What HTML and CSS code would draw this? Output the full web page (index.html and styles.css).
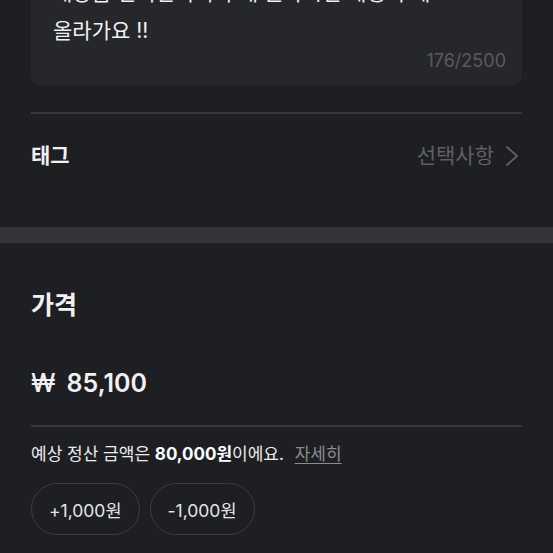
FILE: index.html
```html
<!DOCTYPE html>
<html lang="ko">
<head>
<meta charset="utf-8">
<link rel="stylesheet" href="styles.css">
</head>
<body>
<div class="section top">
  <div class="desc">
    <p class="desc-text">새상품 컨디션이며 구매 원하시면 채팅 주세요<br>올라가요 !!</p>
    <div class="counter">176/2500</div>
  </div>
  <div class="divider"></div>
  <div class="tag-row">
    <span class="tag-label">태그</span>
    <span class="tag-value">선택사항
      <svg class="chev" width="14" height="22" viewBox="0 0 14 22"><polyline points="2,2 12,11 2,20" fill="none" stroke="#626366" stroke-width="1.8" stroke-linecap="round" stroke-linejoin="round"/></svg>
    </span>
  </div>
</div>
<div class="band"></div>
<div class="section price">
  <h2 class="price-title">가격</h2>
  <div class="price-value"><span class="won">₩</span><span>85,100</span></div>
  <div class="divider"></div>
  <p class="settle">예상 정산 금액은 <b>80,000원</b>이에요. <a class="more">자세히</a></p>
  <div class="btns">
    <button class="pill">+1,000원</button>
    <button class="pill">-1,000원</button>
  </div>
</div>
</body>
</html>
```
FILE: styles.css
```css
html, body {
  margin: 0;
  padding: 0;
  background: #1e1f22;
  color: #f1f1f2;
  font-family: Inter, "Noto Sans CJK KR", sans-serif;
  overflow: hidden;
}
.section {
  padding: 0 31px;
}
.top {
  margin-top: -42px;
}
.desc {
  background: #26272a;
  border-radius: 0 0 9px 9px;
  padding: 16px 16px 13px 22px;
}
.desc-text {
  margin: 0;
  font-size: 21px;
  line-height: 38px;
  color: #f1f1f2;
}
.counter {
  text-align: right;
  font-size: 18px;
  line-height: 22px;
  color: #5a5b5e;
}
.divider {
  height: 2px;
  background: #37383b;
}
.top .divider {
  margin-top: 27px;
}
.tag-row {
  display: flex;
  justify-content: space-between;
  align-items: center;
  padding: 30px 0 59px;
  line-height: 24px;
}
.tag-label {
  font-size: 21px;
  font-weight: 700;
}
.tag-value {
  display: flex;
  align-items: center;
  gap: 11px;
  font-size: 21px;
  color: #5f6063;
  margin-right: 3px;
}
.band {
  height: 16px;
  background: #343538;
}
.price-title {
  margin: 0;
  padding-top: 46px;
  font-size: 25px;
  line-height: 32px;
  font-weight: 700;
}
.price-value {
  display: flex;
  gap: 11px;
  margin-top: 46px;
  font-size: 25px;
  line-height: 32px;
  font-weight: 600;
}
.won {
  font-weight: 500;
}
.price .divider {
  margin-top: 26px;
}
.settle {
  margin: 15px 0 0;
  font-size: 17px;
  line-height: 24px;
  color: #ececed;
}
.settle b {
  font-weight: 700;
  color: #ffffff;
}
.more {
  margin-left: 6px;
  color: #8b8c8f;
  text-decoration: underline;
  text-underline-offset: 3px;
}
.btns {
  display: flex;
  gap: 10px;
  margin-top: 17px;
}
.pill {
  height: 52px;
  padding: 0 17px;
  border: 1.5px solid #3b3c3f;
  border-radius: 26px;
  background: transparent;
  color: #e6e6e7;
  font-family: Inter, "Noto Sans CJK KR", sans-serif;
  font-size: 17.5px;
}
```
